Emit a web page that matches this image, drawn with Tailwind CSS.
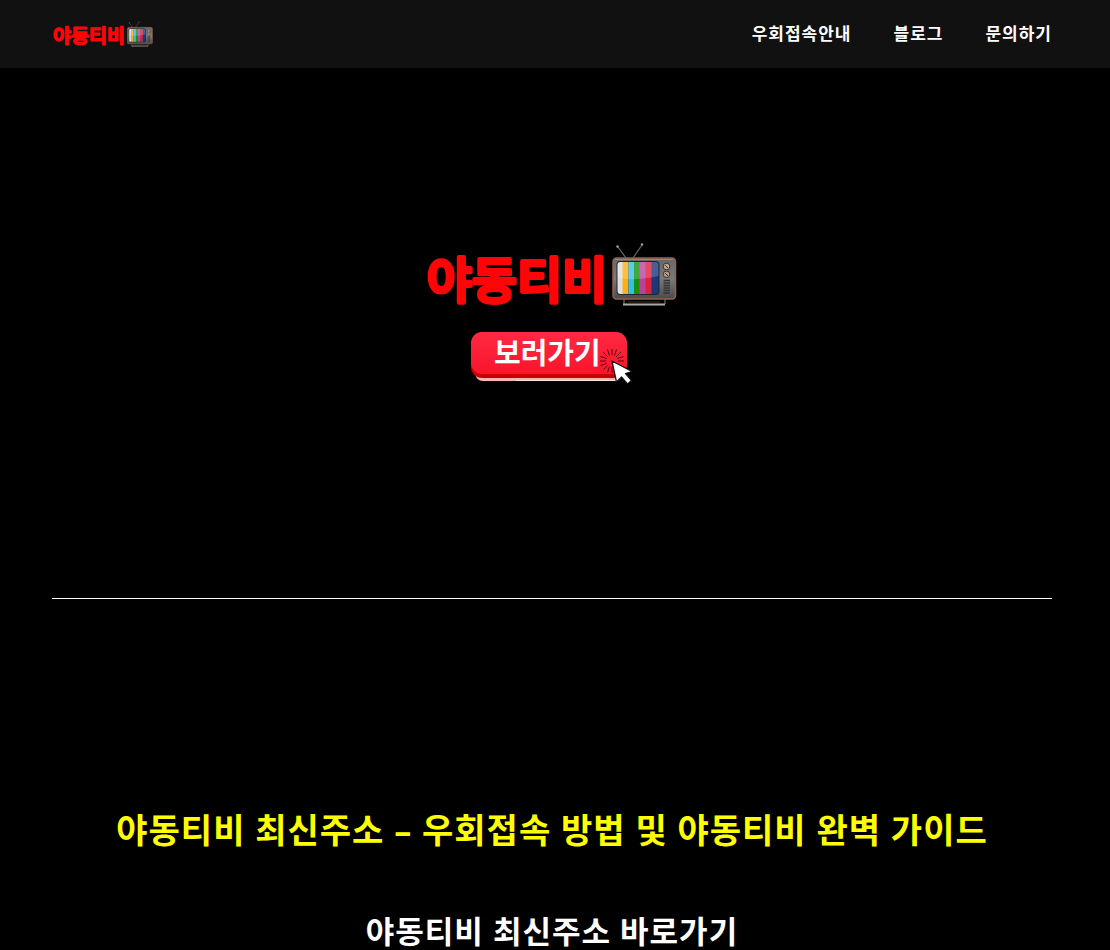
<!DOCTYPE html>
<html lang="ko">
<head>
    <meta charset="UTF-8">
    <meta name="viewport" content="width=device-width, initial-scale=1.0">
    <title>야동티비</title>
    <script src="https://cdn.jsdelivr.net/npm/@tailwindcss/browser@4"></script>
</head>
<body class="bg-black text-white font-['Open_Sans','Noto_Sans_CJK_KR',sans-serif]">

    <!-- Shared logo -->
    <svg class="w-0 h-0" aria-hidden="true">
        <defs>
            <linearGradient id="tvBody" x1="0" y1="0" x2="0" y2="1">
                <stop offset="0" stop-color="#666666"/>
                <stop offset="0.5" stop-color="#7a7a7a"/>
                <stop offset="1" stop-color="#4a4a4a"/>
            </linearGradient>
            <clipPath id="tvScreen">
                <rect x="190.5" y="20" width="41" height="32" rx="3"/>
            </clipPath>
        </defs>
        <symbol id="logo" viewBox="0 0 250 65">
            <text x="0" y="56" font-size="49" font-weight="500" fill="#ff0508" stroke="#ff0508" stroke-width="4" stroke-linejoin="round">야동티비</text>
            <!-- antennas -->
            <path d="M199 16 191 5M206 16 215 3" stroke="#66696c" stroke-width="1.2" fill="none"/>
            <circle cx="190.5" cy="4.5" r="1.2" fill="#a5a5a5"/>
            <circle cx="215" cy="2.5" r="1.2" fill="#a5a5a5"/>
            <!-- stand -->
            <path d="M197 57v5M238 57v5" stroke="#555" stroke-width="1.5"/>
            <path d="M196 62.5h42" stroke="#a9a9a9" stroke-width="2"/>
            <path d="M201 60h32" stroke="#333" stroke-width="1"/>
            <!-- case -->
            <rect x="186" y="16" width="62.5" height="41" rx="3.5" fill="url(#tvBody)" stroke="#9b6045" stroke-width="1.5"/>
            <path d="M188 17.5h58" stroke="#999" stroke-width="0.7"/>
            <rect x="189.5" y="19" width="43" height="34" rx="4" fill="#20242c"/>
            <g clip-path="url(#tvScreen)">
                <rect x="190" y="19" width="6" height="34" fill="#dedede"/>
                <rect x="195.5" y="19" width="6" height="34" fill="#fdae12"/>
                <rect x="201.5" y="19" width="6" height="34" fill="#2fc1e8"/>
                <rect x="207" y="19" width="6" height="34" fill="#16900e"/>
                <rect x="212.5" y="19" width="6.5" height="34" fill="#b8449a"/>
                <rect x="218.5" y="19" width="6.5" height="34" fill="#e01f3d"/>
                <rect x="224.5" y="19" width="8" height="34" fill="#1b3878"/>
                <path d="M190 19h42v15q-20 5-42 2z" fill="#fff" opacity="0.2"/>
            </g>
            <!-- knobs and speaker -->
            <circle cx="239.5" cy="24.5" r="3.3" fill="#c3a48c" stroke="#3a3330" stroke-width="1"/>
            <path d="M238 23l3 3" stroke="#4b3830" stroke-width="1"/>
            <circle cx="239.5" cy="32.3" r="3.3" fill="#b99a84" stroke="#3a3330" stroke-width="1"/>
            <path d="M238 31l3 3" stroke="#4b3830" stroke-width="1"/>
            <path d="M236.5 38.5h6.5M236.5 41h6.5M236.5 43.5h6.5M236.5 46h6.5M236.5 48.5h6.5M236.5 51h6.5" stroke="#333" stroke-width="1.3"/>
        </symbol>
    </svg>

    <header class="bg-[#111111] pr-1.5">
        <div class="max-w-[1000px] h-[68px] mx-auto flex items-center justify-between">
            <a href="#" aria-label="야동티비">
                <svg class="w-[100px] h-[26px] ml-px"><use href="#logo"/></svg>
            </a>
            <nav class="flex gap-[42px] text-[17px] leading-6 font-bold tracking-[1px]">
                <a href="#">우회접속안내</a>
                <a href="#">블로그</a>
                <a href="#">문의하기</a>
            </nav>
        </div>
    </header>

    <main class="pr-1.5">
        <div class="max-w-[1000px] mx-auto">

            <section class="flex flex-col items-center gap-6 pt-[174px] pb-[212px] border-b border-white">
                <svg class="w-[250px] h-[65px]" role="img" aria-label="야동티비"><use href="#logo"/></svg>
                <a href="#">
                    <svg class="w-[164px] h-[55px]" viewBox="0 0 164 55">
                        <defs>
                            <linearGradient id="btn" x1="0" y1="0" x2="0" y2="1">
                                <stop offset="0" stop-color="#ff2a42"/>
                                <stop offset="1" stop-color="#f9142b"/>
                            </linearGradient>
                        </defs>
                        <rect x="5" y="30" width="148" height="20" rx="8" fill="#ffb3b5"/>
                        <path d="M46 49.5h100" stroke="#ffe1e1" stroke-width="1"/>
                        <rect x="1" y="8" width="156" height="39" rx="11" fill="#c90000"/>
                        <rect x="1" y="1" width="156" height="42" rx="11" fill="url(#btn)"/>
                        <text x="24" y="33" font-size="29" font-weight="700" fill="#fff">보러가기</text>
                        <path d="M142 24V18M142 36v6M136 30h-6M148 30h6M138 26l-5-5M146 26l5-5M138 34l-5 5M139.5 24.5l-2-6M144.5 24.5l2-6M136.5 27.5l-6-2M147.5 27.5l6-2M136.5 32.5l-6 2M139.5 35.5l-2 6" stroke="#5c0610" stroke-width="1"/>
                        <path d="M142 30l4.5 21 5-5 6 7 4-3.5-6-7 6.5-2z" fill="#fff" stroke="#111" stroke-width="1.2" stroke-linejoin="round"/>
                    </svg>
                </a>
            </section>

            <section class="pt-[207px] pb-12 text-center font-bold">
                <h1 class="text-[34px] leading-[48px] text-[#ffff00] tracking-[1px]">야동티비 최신주소 – 우회접속 방법 및 야동티비 완벽 가이드</h1>
                <h2 class="mt-[54px] text-[31px] leading-[46px] tracking-[1px]">야동티비 최신주소 바로가기</h2>
            </section>

        </div>
    </main>

</body>
</html>
